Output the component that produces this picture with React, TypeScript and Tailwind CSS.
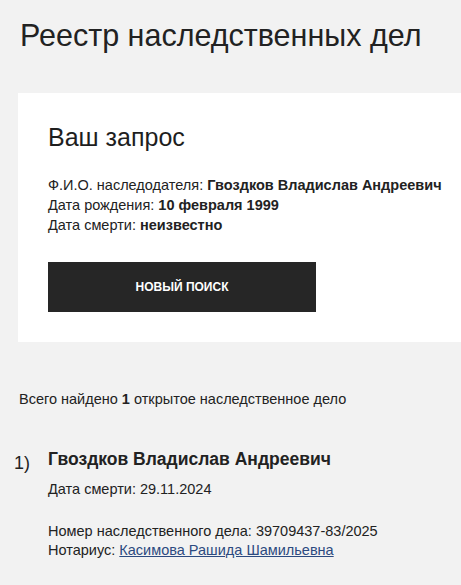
import React from "react";

export default function App() {
  return (
    <div className="min-h-[585px] w-[461px] overflow-hidden bg-[#f2f2f2] text-[#222] font-['Liberation_Sans',Arial,sans-serif]">
      <h1 className="pl-5 pt-[16px] text-[30.5px] leading-[38px] font-normal text-[#222]">Реестр наследственных дел</h1>
      <div className="ml-[18px] mt-[39px] h-[249px] bg-white pl-[30px] pt-[29px]">
        <h2 className="text-[25px] leading-[30px] font-normal text-[#1e1e1e]">Ваш запрос</h2>
        <div className="mt-[23px] text-[14.5px] leading-[20px]">
          <div>Ф.И.О. наследодателя: <b>Гвоздков Владислав Андреевич</b></div>
          <div>Дата рождения: <b>10 февраля 1999</b></div>
          <div>Дата смерти: <b>неизвестно</b></div>
        </div>
        <button className="mt-[27px] flex h-[50px] w-[268px] items-center justify-center bg-[#262626] text-[12px] font-bold text-white">НОВЫЙ ПОИСК</button>
      </div>
      <div className="mt-[47px] pl-[19px] text-[14.5px] leading-[20px]">
        Всего найдено <b>1</b> открытое наследственное дело
      </div>
      <div className="mt-[39px] flex">
        <div className="w-[48px] pl-[14px] pt-[4px] text-[18px] leading-[22px]">1)</div>
        <div className="text-[14.5px] leading-[20px]">
          <div className="text-[17.5px] leading-[22px] font-bold">Гвоздков Владислав Андреевич</div>
          <div className="mt-[9px]">Дата смерти: 29.11.2024</div>
          <div className="mt-[23px] leading-[19px]">Номер наследственного дела: 39709437-83/2025</div>
          <div className="leading-[19px]">Нотариус: <a href="#" className="text-[#2c4a80] underline">Касимова Рашида Шамильевна</a></div>
        </div>
      </div>
    </div>
  );
}
